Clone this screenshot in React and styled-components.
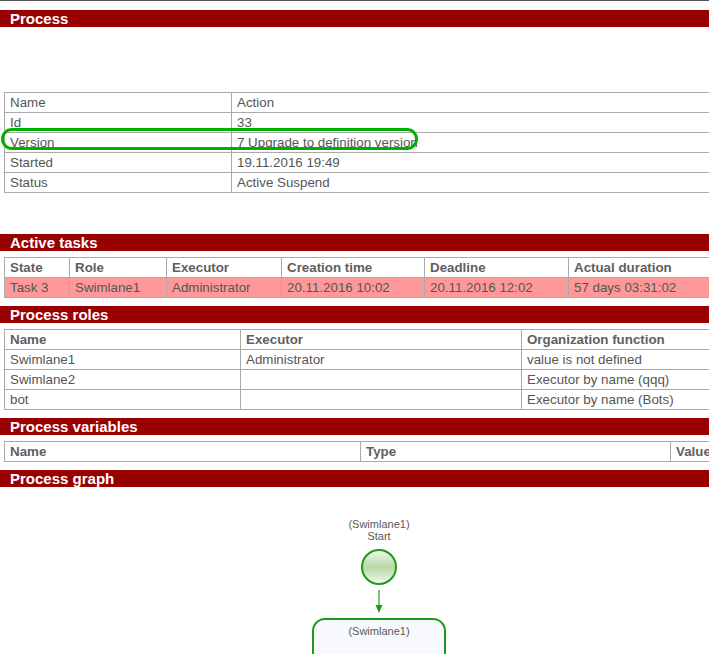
import React from 'react';
import styled, { createGlobalStyle } from 'styled-components';

const GlobalStyle = createGlobalStyle`
  html, body {
    margin: 0;
    padding: 0;
    background: #fff;
    overflow: hidden;
  }
  body {
    font-family: 'Liberation Sans', Arial, sans-serif;
  }
`;

const processInfo = [
  ['Name', 'Action'],
  ['Id', '33'],
  ['Version', '7 Upgrade to definition version'],
  ['Started', '19.11.2016 19:49'],
  ['Status', 'Active Suspend'],
];

const roles = [
  ['Swimlane1', 'Administrator', 'value is not defined'],
  ['Swimlane2', '', 'Executor by name (qqq)'],
  ['bot', '', 'Executor by name (Bots)'],
];

const App = () => (
  <>
    <GlobalStyle />
    <Page>
      <TopRule />
      <SectionTitle>Process</SectionTitle>

      <InfoBlock>
        <Table>
          <colgroup>
            <Col w={227} />
            <col />
          </colgroup>
          <tbody>
            {processInfo.map(([k, v]) => (
              <tr key={k}>
                <Td>{k}</Td>
                <Td>{v}</Td>
              </tr>
            ))}
          </tbody>
        </Table>
        <Highlight />
      </InfoBlock>

      <SectionTitle gap={41}>Active tasks</SectionTitle>
      <Table>
        <colgroup>
          <Col w={65} />
          <Col w={97} />
          <Col w={115} />
          <Col w={143} />
          <Col w={144} />
          <col />
        </colgroup>
        <thead>
          <tr>
            <Th>State</Th>
            <Th>Role</Th>
            <Th>Executor</Th>
            <Th>Creation time</Th>
            <Th>Deadline</Th>
            <Th>Actual duration</Th>
          </tr>
        </thead>
        <tbody>
          <Tr overdue>
            <Td>Task 3</Td>
            <Td>Swimlane1</Td>
            <Td>Administrator</Td>
            <Td>20.11.2016 10:02</Td>
            <Td>20.11.2016 12:02</Td>
            <Td>57 days 03:31:02</Td>
          </Tr>
        </tbody>
      </Table>

      <SectionTitle>Process roles</SectionTitle>
      <Table>
        <colgroup>
          <Col w={236} />
          <Col w={281} />
          <col />
        </colgroup>
        <thead>
          <tr>
            <Th>Name</Th>
            <Th>Executor</Th>
            <Th>Organization function</Th>
          </tr>
        </thead>
        <tbody>
          {roles.map(([n, e, f]) => (
            <tr key={n}>
              <Td>{n}</Td>
              <Td>{e}</Td>
              <Td>{f}</Td>
            </tr>
          ))}
        </tbody>
      </Table>

      <SectionTitle>Process variables</SectionTitle>
      <Table>
        <colgroup>
          <Col w={356} />
          <Col w={310} />
          <col />
        </colgroup>
        <thead>
          <tr>
            <Th>Name</Th>
            <Th>Type</Th>
            <Th>Value</Th>
          </tr>
        </thead>
      </Table>

      <SectionTitle>Process graph</SectionTitle>
      <Graph width="709" height="170" viewBox="0 0 709 170">
        <defs>
          <linearGradient id="startFill" x1="0" y1="0" x2="0" y2="1">
            <stop offset="0" stopColor="#f4f9ef" />
            <stop offset="0.5" stopColor="#b9d8a6" />
            <stop offset="1" stopColor="#f4f9ef" />
          </linearGradient>
        </defs>
        <NodeLabel x="379" y="41">(Swimlane1)</NodeLabel>
        <NodeLabel x="379" y="53">Start</NodeLabel>
        <circle cx="379" cy="80" r="17" fill="url(#startFill)" stroke="#1c9a1c" strokeWidth="2" />
        <line x1="379" y1="103" x2="379" y2="119" stroke="#1c9a1c" strokeWidth="1.2" />
        <polygon points="375.5,118 382.5,118 379,126" fill="#1c9a1c" />
        <rect x="313" y="132" width="132" height="80" rx="12" fill="#f7f9fc" stroke="#1c9a1c" strokeWidth="2" />
        <NodeLabel x="379" y="148">(Swimlane1)</NodeLabel>
      </Graph>
    </Page>
  </>
);

const Page = styled.div`
  width: 800px;
  color: #555;
`;

const TopRule = styled.div`
  height: 1px;
  background: #555;
`;

const SectionTitle = styled.div`
  margin-top: ${props => (props.gap != null ? props.gap : 8)}px;
  height: 17px;
  line-height: 17px;
  padding-left: 10px;
  background: #990000;
  color: #fff;
  font-size: 15px;
  font-weight: bold;
  &:nth-child(2) {
    margin-top: 9px;
  }
`;

const InfoBlock = styled.div`
  position: relative;
  margin-top: 65px;
`;

const Highlight = styled.div`
  position: absolute;
  left: 1px;
  top: 36px;
  width: 411px;
  height: 16px;
  border: 3.5px solid #00b000;
  border-radius: 11px;
  pointer-events: none;
`;

const Table = styled.table`
  margin: 6px 0 0 4px;
  width: 790px;
  table-layout: fixed;
  border-collapse: collapse;
  font-size: 13.33px;
  ${InfoBlock} & {
    margin-top: 0;
  }
`;

const Col = styled.col`
  width: ${props => props.w}px;
`;

const Tr = styled.tr`
  background: ${props => (props.overdue ? '#ff9999' : 'transparent')};
`;

const Td = styled.td`
  height: 19px;
  padding: 0 5px;
  border: 1px solid #aaa;
  text-align: left;
  white-space: nowrap;
  overflow: hidden;
  line-height: 19px;
`;

const Th = styled(Td).attrs({ as: 'th' })`
  font-weight: bold;
  color: #5f5f5f;
`;

const Graph = styled.svg`
  display: block;
`;

const NodeLabel = styled.text`
  font-family: 'Liberation Sans', Arial, sans-serif;
  font-size: 11px;
  fill: #5a5a5a;
  text-anchor: middle;
`;

export default App;
